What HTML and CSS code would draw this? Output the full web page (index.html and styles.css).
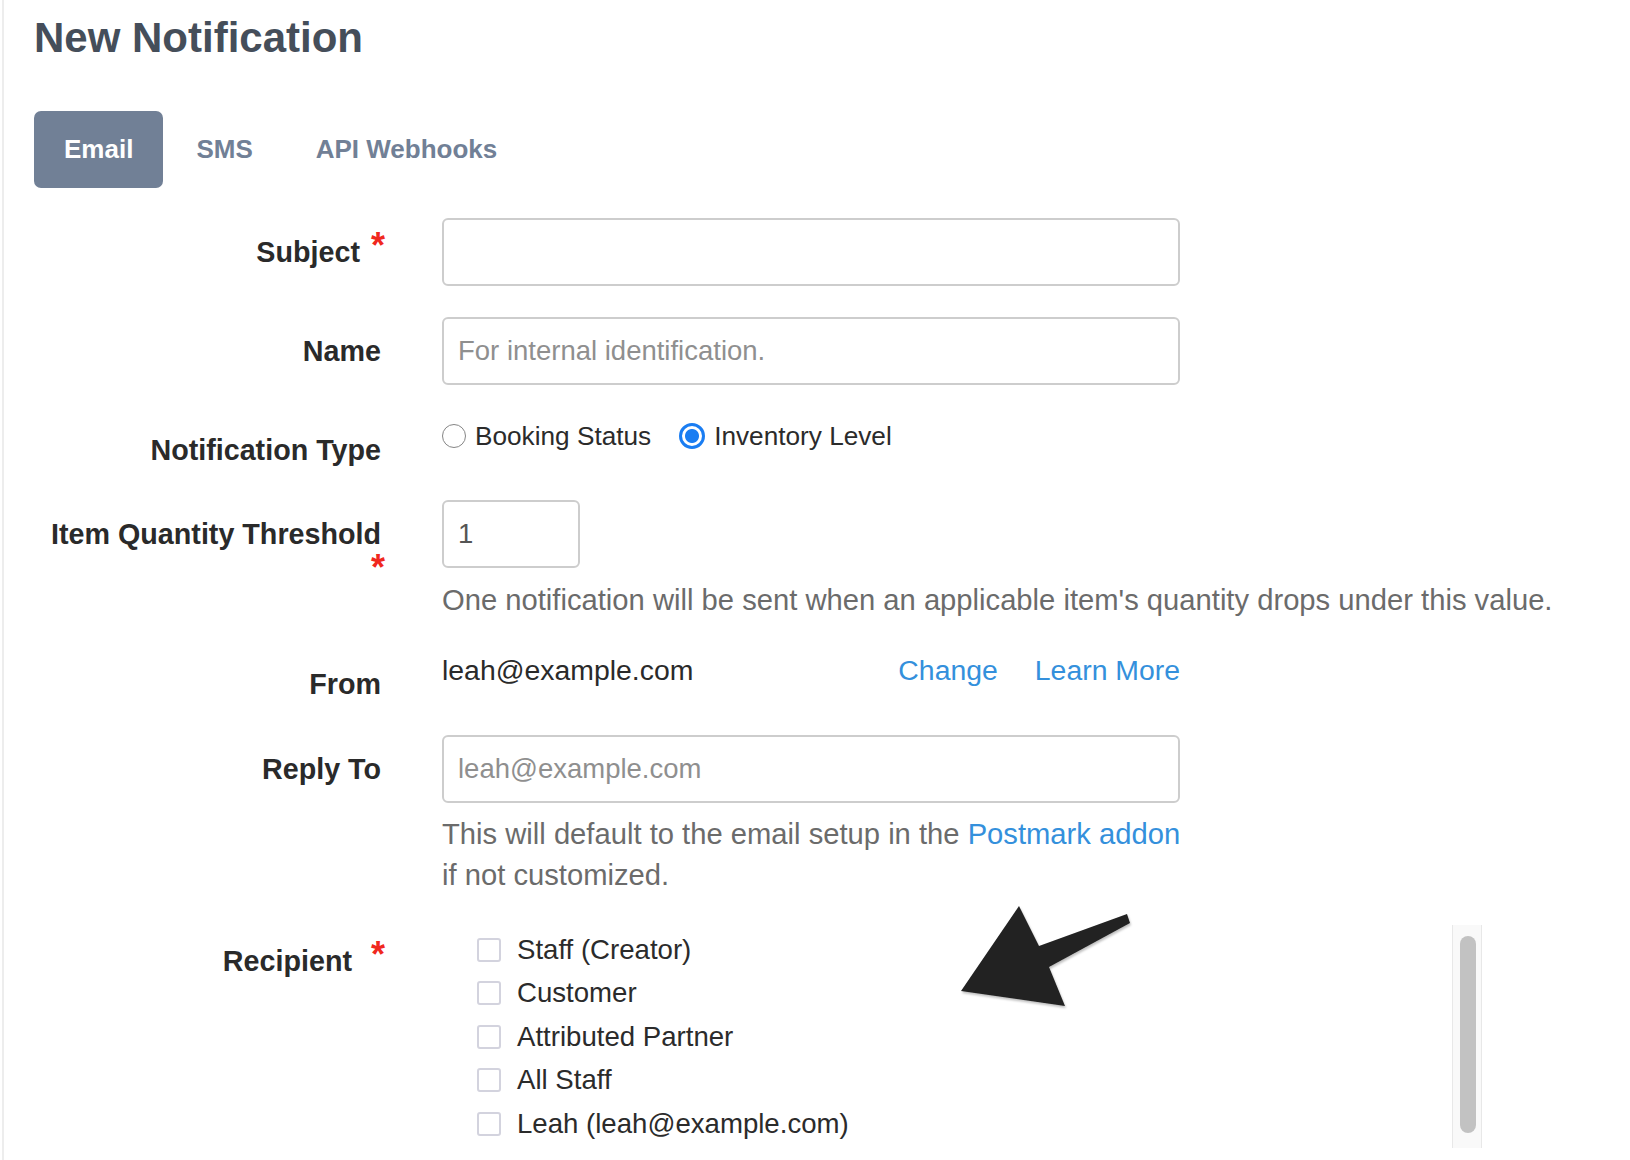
FILE: index.html
```html
<!DOCTYPE html>
<html lang="en">
<head>
<meta charset="utf-8">
<title>New Notification</title>
<link rel="stylesheet" href="styles.css">
</head>
<body>
<div class="page">
  <h1 class="title">New Notification</h1>

  <nav class="tabs">
    <a class="tab tab-active">Email</a>
    <a class="tab">SMS</a>
    <a class="tab">API Webhooks</a>
  </nav>

  <form class="form">
    <div class="row">
      <label class="label">Subject<span class="req">*</span></label>
      <div class="field">
        <input class="input" type="text">
      </div>
    </div>

    <div class="row">
      <label class="label">Name</label>
      <div class="field">
        <input class="input" type="text" placeholder="For internal identification.">
      </div>
    </div>

    <div class="row">
      <label class="label">Notification Type</label>
      <div class="field radios">
        <label class="radio-opt"><input class="radio" type="radio" name="ntype"><span>Booking Status</span></label>
        <label class="radio-opt"><input class="radio" type="radio" name="ntype" checked><span>Inventory Level</span></label>
      </div>
    </div>

    <div class="row row-tight">
      <label class="label">Item Quantity Threshold<br><span class="req">*</span></label>
      <div class="field">
        <input class="input input-small" type="text" value="1">
        <p class="help">One notification will be sent when an applicable item's quantity drops under this value.</p>
      </div>
    </div>

    <div class="row row-tight">
      <label class="label">From</label>
      <div class="field from">
        <span class="from-email">leah@example.com</span>
        <a class="link">Change</a>
        <a class="link">Learn More</a>
      </div>
    </div>

    <div class="row">
      <label class="label">Reply To</label>
      <div class="field">
        <input class="input" type="text" placeholder="leah@example.com">
        <p class="help help-narrow">This will default to the email setup in the <a class="link">Postmark addon</a><br>if not customized.</p>
      </div>
    </div>

    <div class="row row-recipient">
      <label class="label label-recipient">Recipient<span class="req req-wide">*</span></label>
      <div class="field recipient-box">
        <ul class="options">
          <li class="option"><span class="checkbox"></span>Staff (Creator)</li>
          <li class="option"><span class="checkbox"></span>Customer</li>
          <li class="option"><span class="checkbox"></span>Attributed Partner</li>
          <li class="option"><span class="checkbox"></span>All Staff</li>
          <li class="option"><span class="checkbox"></span>Leah (leah@example.com)</li>
        </ul>
        <div class="track"><div class="thumb"></div></div>
      </div>
    </div>
  </form>

  <svg class="arrow" width="190" height="120" viewBox="0 0 190 120" aria-hidden="true">
    <defs>
      <filter id="sh" x="-10%" y="-10%" width="130%" height="130%">
        <feDropShadow dx="1" dy="2" stdDeviation="1.2" flood-color="#000" flood-opacity="0.25"/>
      </filter>
    </defs>
    <polygon filter="url(#sh)" fill="#222" points="11,93 69,8 89,48 177,16 180,25 99,69 115,108"/>
  </svg>
</div>
</body>
</html>
```

FILE: styles.css
```css
* { box-sizing: border-box; }

html, body {
  margin: 0;
  padding: 0;
  background: #fff;
}

body {
  font-family: "Liberation Sans", Helvetica, Arial, sans-serif;
  color: #2b2b2b;
  overflow: hidden;
}

.page {
  position: relative;
  margin-left: 2px;
  border-left: 2px solid #ededed;
  padding-left: 30px;
  min-height: 1160px;
}

.title {
  margin: 0;
  padding-top: 14px;
  font-size: 42px;
  line-height: 48px;
  font-weight: 700;
  color: #454e5a;
}

.tabs {
  display: flex;
  gap: 3px;
  margin-top: 49px;
}

.tab {
  display: flex;
  align-items: center;
  height: 77px;
  padding: 0 30px;
  border-radius: 7px;
  font-size: 26px;
  font-weight: 700;
  color: #718096;
  cursor: pointer;
}

.tab-active {
  background: #718096;
  color: #fff;
}

.form {
  margin-top: 30px;
}

.row {
  display: grid;
  grid-template-columns: 347px 1fr;
  column-gap: 61px;
  align-items: start;
}

.row + .row { margin-top: 31px; }
.row + .row-tight { margin-top: 30px; }
.row + .row-recipient { margin-top: 29px; }

.label {
  padding-top: 14px;
  text-align: right;
  font-size: 28.7px;
  line-height: 40px;
  font-weight: 700;
  color: #2a2a2a;
}

.label-recipient {
  padding-top: 16px;
}

.req {
  position: relative;
  left: 4px;
  top: -4px;
  margin-left: 7px;
  color: #f0281e;
  font-size: 36px;
  font-weight: 700;
  line-height: 0;
}

.req-wide { margin-left: 15px; }

.field {
  min-width: 0;
}

.input {
  display: block;
  width: 738px;
  height: 68px;
  padding: 0 14px;
  border: 2px solid #cdcdcd;
  border-radius: 6px;
  font-family: inherit;
  font-size: 27.5px;
  color: #555;
  background: #fff;
  outline: none;
}

.input::placeholder { color: #8f8f8f; }

.input-small { width: 138px; }

.help {
  margin: 12px 0 0;
  font-size: 29.2px;
  line-height: 40px;
  color: #6b6b6b;
  white-space: nowrap;
}

.help-narrow {
  margin-top: 11px;
  line-height: 41px;
}

.link {
  color: #3490dc;
  text-decoration: none;
  cursor: pointer;
}

.radios {
  display: flex;
  align-items: center;
  gap: 28px;
  height: 40px;
}

.radio-opt {
  display: flex;
  align-items: center;
  gap: 9px;
  font-size: 26.2px;
  line-height: 40px;
  color: #2b2b2b;
}

.radio {
  appearance: none;
  -webkit-appearance: none;
  margin: 0;
  width: 24px;
  height: 24px;
  border: 1.5px solid #858585;
  border-radius: 50%;
  background: #fff;
}

.radio:checked {
  width: 26px;
  height: 26px;
  border: 3px solid #1a7df2;
  background: radial-gradient(circle, #1a7df2 0 6.5px, #fff 7.5px);
}

.from {
  display: flex;
  align-items: center;
  width: 738px;
  height: 40px;
  font-size: 28.4px;
  gap: 37px;
}

.from-email {
  flex: 1;
  color: #2a2a2a;
}

.recipient-box {
  display: flex;
  width: 1040px;
  height: 223px;
}

.options {
  flex: 1;
  list-style: none;
  margin: 0;
  padding: 3px 0 0 35px;
}

.option {
  display: flex;
  align-items: center;
  gap: 16px;
  height: 43.5px;
  font-size: 27.6px;
  color: #2b2b2b;
}

.checkbox {
  width: 24px;
  height: 24px;
  border: 2px solid #d3d3de;
  border-radius: 3px;
  background: #fff;
  flex: none;
}

.track {
  width: 30px;
  height: 223px;
  padding: 11px 5px 15px 7px;
  background: #f9f9f9;
  border-left: 1px solid #e8e8e8;
  border-right: 1px solid #e8e8e8;
}

.thumb {
  width: 16px;
  height: 100%;
  border-radius: 8px;
  background: #c2c2c2;
}

.arrow {
  position: absolute;
  left: 946px;
  top: 898px;
}
```
